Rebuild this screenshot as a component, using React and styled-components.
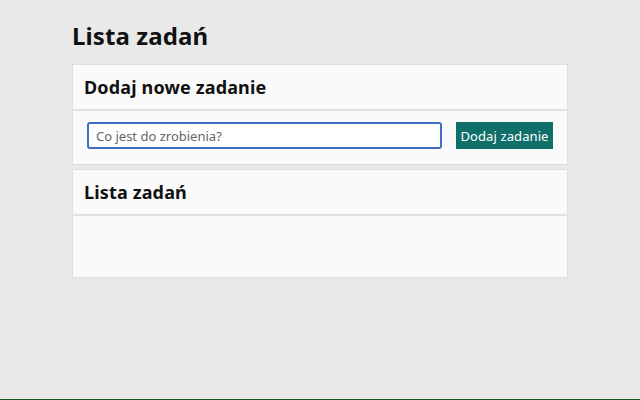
import React, { useState } from "react";
import styled, { createGlobalStyle } from "styled-components";

const GlobalStyle = createGlobalStyle`
  html, body {
    margin: 0;
    padding: 0;
    background: #e9e9e9;
    font-family: "Noto Sans", "DejaVu Sans", sans-serif;
    color: #111;
  }
`;

const Page = styled.div`
  min-height: 100vh;
  box-sizing: border-box;
  border-bottom: 1px solid #1f5a1c;
  display: flex;
  justify-content: center;
`;

const Main = styled.main`
  width: 496px;
  padding-top: 20px;
  display: flex;
  flex-direction: column;
  gap: 4px;
`;

const Title = styled.h1`
  margin: 0 0 8px;
  font-size: 24px;
  line-height: 32px;
  font-weight: 700;
  letter-spacing: 0.1px;
`;

const Card = styled.section`
  background: #fafafa;
  border: 1px solid #dedede;
  display: flex;
  flex-direction: column;
`;

const CardHeader = styled.div`
  height: 44px;
  padding: 0 11px;
  display: flex;
  align-items: center;
  border-bottom: 2px solid #e0e0e0;
`;

const CardTitle = styled.h2`
  margin: 0;
  font-size: 18px;
  font-weight: 700;
  letter-spacing: 0.15px;
`;

const CardBody = styled.div`
  min-height: ${p => p.$min || 0}px;
  padding: ${p => p.$pad || "0"};
`;

const Form = styled.form`
  display: flex;
  align-items: center;
  gap: 14px;
`;

const TextInput = styled.input`
  flex: 1;
  height: 27px;
  box-sizing: border-box;
  border: 2px solid #3d6fc6;
  border-radius: 3px;
  padding: 0 7px;
  font-family: inherit;
  font-size: 13px;
  color: #333;
  background: #fff;
  outline: none;

  &::placeholder {
    color: #666;
  }
`;

const Button = styled.button`
  width: 97px;
  height: 27px;
  padding: 0;
  border: none;
  background: #106f69;
  color: #fff;
  font-family: inherit;
  font-size: 13px;
  letter-spacing: 0.1px;
  cursor: pointer;
`;

export default function App() {
  const [text, setText] = useState("");

  return (
    <>
      <GlobalStyle />
      <Page>
        <Main>
          <Title>Lista zadań</Title>
          <Card>
            <CardHeader>
              <CardTitle>Dodaj nowe zadanie</CardTitle>
            </CardHeader>
            <CardBody $pad="11px 14px 15px">
              <Form onSubmit={e => e.preventDefault()}>
                <TextInput
                  type="text"
                  value={text}
                  onChange={e => setText(e.target.value)}
                  placeholder="Co jest do zrobienia?"
                />
                <Button>Dodaj zadanie</Button>
              </Form>
            </CardBody>
          </Card>
          <Card>
            <CardHeader>
              <CardTitle>Lista zadań</CardTitle>
            </CardHeader>
            <CardBody $min={61} />
          </Card>
        </Main>
      </Page>
    </>
  );
}
